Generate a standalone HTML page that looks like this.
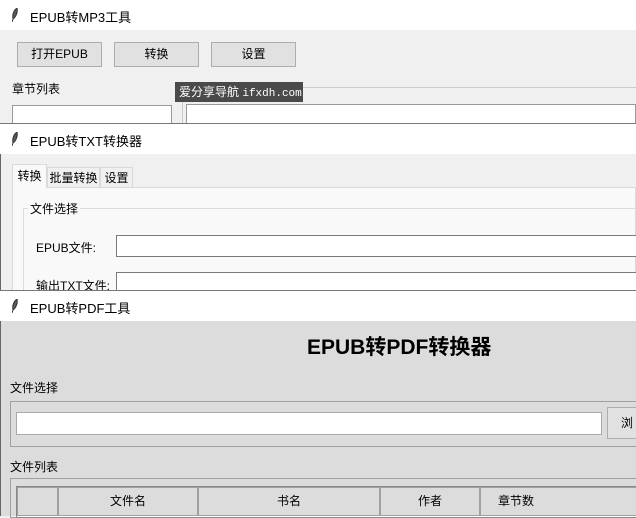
<!DOCTYPE html>
<html><head><meta charset="utf-8"><style>
*{box-sizing:border-box;margin:0;padding:0}
body{width:636px;height:516px;overflow:hidden;position:relative;font-family:"Liberation Sans","Noto Sans CJK SC",sans-serif;font-size:12px;color:#000;background:#f0f0f0}
.a{position:absolute}
.tb{background:#fff;height:30px;width:636px;left:0}
.tt{position:absolute;left:30px;top:7px;font-size:13px}
.ic{position:absolute;left:12px;top:8px;width:6px;height:14px}
.btn{position:absolute;background:#e1e1e1;border:1px solid #adadad;text-align:center;line-height:22px}
.inp{position:absolute;background:#fff;border:1px solid #7a7a7a}
</style></head><body>
<!-- window 1 -->
<div class="a" style="left:0;top:0;width:636px;height:124px;background:#f0f0f0"></div>
<div class="a tb" style="top:0"><svg class="ic" viewBox="0 0 6 14"><path d="M5 0C2 2 0 6 1 11L0 14M5 0C6 4 4 9 1 11" stroke="#333" fill="#555" stroke-width="1"/></svg><span class="tt">EPUB转MP3工具</span></div>
<div class="btn" style="left:17px;top:42px;width:85px;height:25px">打开EPUB</div>
<div class="btn" style="left:114px;top:42px;width:85px;height:25px">转换</div>
<div class="btn" style="left:211px;top:42px;width:85px;height:25px">设置</div>
<div class="a" style="left:12px;top:80px">章节列表</div>
<div class="a" style="left:186px;top:80px">书籍信息</div>
<div class="a" style="left:12px;top:105px;width:160px;height:20px;background:#fff;border:1px solid #999"></div>
<div class="a" style="left:182px;top:87px;width:454px;height:38px;border-left:1px solid #ccc;border-top:1px solid #ccc"></div>
<div class="a" style="left:186px;top:104px;width:450px;height:21px;background:#fff;border:1px solid #999"></div>
<div class="a" style="left:175px;top:82px;width:128px;height:20px;background:#4a4a4a;color:#fff;font-size:12px;line-height:20px;padding-left:4px;white-space:nowrap;overflow:hidden">爱分享导航 <span style="font-family:'Liberation Mono',monospace;font-size:11px">ifxdh.com</span></div>
<!-- window 2 -->
<div class="a" style="left:0;top:123px;width:636px;height:1px;background:#777"></div>
<div class="a" style="left:0;top:124px;width:636px;height:168px;background:#f0f0f0;border-left:1px solid #666"></div>
<div class="a tb" style="top:124px"><svg class="ic" viewBox="0 0 6 14"><path d="M5 0C2 2 0 6 1 11L0 14M5 0C6 4 4 9 1 11" stroke="#333" fill="#555"/></svg><span class="tt">EPUB转TXT转换器</span></div>
<div class="a" style="left:12px;top:187px;width:624px;height:104px;border:1px solid #d9d9d9;background:#f9f9f9"></div>
<div class="a" style="left:12px;top:164px;width:35px;height:24px;background:#f9f9f9;border:1px solid #d9d9d9;border-bottom:none;line-height:22px;text-align:center">转换</div>
<div class="a" style="left:47px;top:167px;width:53px;height:21px;background:#f0f0f0;border:1px solid #d9d9d9;line-height:20px;text-align:center">批量转换</div>
<div class="a" style="left:100px;top:167px;width:33px;height:21px;background:#f0f0f0;border:1px solid #d9d9d9;line-height:20px;text-align:center">设置</div>
<div class="a" style="left:23px;top:208px;width:613px;height:84px;border:1px solid #dcdcdc;border-right:none;border-bottom:none"></div>
<div class="a" style="left:28px;top:200px;background:#f9f9f9;padding:0 2px">文件选择</div>
<div class="a" style="left:36px;top:239px">EPUB文件:</div>
<div class="inp" style="left:116px;top:235px;width:530px;height:22px"></div>
<div class="a" style="left:36px;top:277px">输出TXT文件:</div>
<div class="inp" style="left:116px;top:272px;width:530px;height:22px"></div>
<!-- window 3 -->
<div class="a" style="left:0;top:290px;width:636px;height:1px;background:#777"></div>
<div class="a" style="left:0;top:291px;width:636px;height:225px;background:#dcdcdc;border-left:1px solid #666"></div>
<div class="a tb" style="top:291px;height:30px"><svg class="ic" viewBox="0 0 6 14"><path d="M5 0C2 2 0 6 1 11L0 14M5 0C6 4 4 9 1 11" stroke="#333" fill="#555"/></svg><span class="tt">EPUB转PDF工具</span></div>
<div class="a" style="left:307px;top:331px;font-size:21px;font-weight:bold;white-space:nowrap">EPUB转PDF转换器</div>
<div class="a" style="left:10px;top:379px">文件选择</div>
<div class="a" style="left:10px;top:401px;width:630px;height:46px;border:1px solid #a0a0a0"></div>
<div class="inp" style="left:16px;top:412px;width:586px;height:23px;border-color:#aaa"></div>
<div class="btn" style="left:607px;top:407px;width:40px;height:32px;background:#e1e1e1;line-height:30px">浏</div>
<div class="a" style="left:10px;top:458px">文件列表</div>
<div class="a" style="left:10px;top:478px;width:630px;height:40px;border:1px solid #a0a0a0"></div>
<div class="a" style="left:16px;top:486px;width:625px;height:32px;border:1px solid #888;background:#fff"></div>
<div class="a" style="left:17px;top:487px;width:41px;height:29px;background:#dcdcdc;border:1px solid #a0a0a0"></div>
<div class="a" style="left:58px;top:487px;width:140px;height:29px;background:#dcdcdc;border:1px solid #a0a0a0;text-align:center;line-height:27px">文件名</div>
<div class="a" style="left:198px;top:487px;width:182px;height:29px;background:#dcdcdc;border:1px solid #a0a0a0;text-align:center;line-height:27px">书名</div>
<div class="a" style="left:380px;top:487px;width:100px;height:29px;background:#dcdcdc;border:1px solid #a0a0a0;text-align:center;line-height:27px">作者</div>
<div class="a" style="left:480px;top:487px;width:160px;height:29px;background:#dcdcdc;border:1px solid #a0a0a0;line-height:27px;padding-left:17px;white-space:nowrap">章节数</div>
</body></html>
